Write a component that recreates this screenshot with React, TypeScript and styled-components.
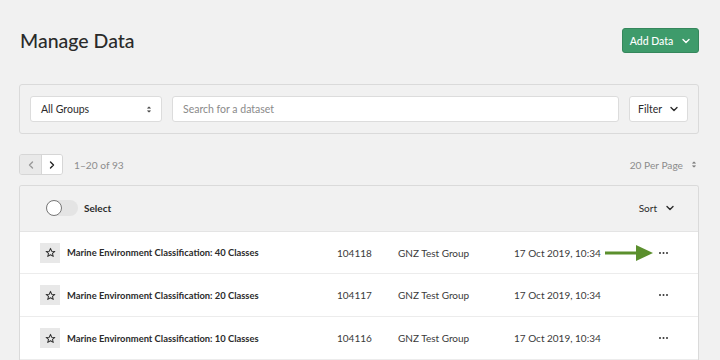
import React from "react";
import styled, { createGlobalStyle } from "styled-components";

const Global = createGlobalStyle`
  html, body { margin: 0; padding: 0; background: #f1f1f1; }
  body { font-family: Lato, "Open Sans", sans-serif; color: #2b2b2b; }
  * { box-sizing: border-box; }
`;

const Page = styled.div`
  width: 720px;
  height: 360px;
  overflow: hidden;
  padding: 28px 21px 0 19px;
  display: flex;
  flex-direction: column;
`;

const Header = styled.div`
  display: flex;
  justify-content: space-between;
  align-items: flex-start;
  height: 56px;
`;

const Title = styled.h1`
  margin: 1px 0 0 1px;
  font-size: 19.5px;
  font-weight: 500;
  color: #2a2a2a;
`;

const PrimaryButton = styled.button`
  height: 25px;
  width: 77px;
  border: 1px solid #35875c;
  border-radius: 3px;
  background: #3e9b6b;
  color: #fff;
  font-family: inherit;
  font-size: 10.5px;
  font-weight: 500;
  display: flex;
  align-items: center;
  justify-content: center;
  gap: 8px;
  padding: 0;
`;

const FilterPanel = styled.div`
  border: 1px solid #dadada;
  border-radius: 3px;
  padding: 11px 10px 10px 10px;
  display: flex;
  gap: 10px;
  height: 50px;
`;

const Field = styled.div<{ $grow?: boolean; $w?: number }>`
  height: 26px;
  background: #fff;
  border: 1px solid #dcdcdc;
  border-radius: 3px;
  display: flex;
  align-items: center;
  justify-content: space-between;
  padding: 0 9px 0 10px;
  font-size: 10.5px;
  color: ${(p) => (p.$grow ? "#8a8a8a" : "#2b2b2b")};
  flex: ${(p) => (p.$grow ? "1" : "none")};
  width: ${(p) => (p.$w ? `${p.$w}px` : "auto")};
`;

const FilterButton = styled(Field)`
  justify-content: center;
  gap: 7px;
  padding: 0;
  color: #2b2b2b;
`;

const PagerRow = styled.div`
  margin-top: 20px;
  height: 21px;
  display: flex;
  align-items: center;
  justify-content: space-between;
`;

const PagerLeft = styled.div`
  display: flex;
  align-items: center;
  gap: 11px;
`;

const PagerGroup = styled.div`
  display: flex;
  border: 1px solid #d6d6d6;
  border-radius: 3px;
  overflow: hidden;
`;

const PagerBtn = styled.div<{ $disabled?: boolean }>`
  width: 21px;
  height: 19px;
  display: flex;
  align-items: center;
  justify-content: center;
  background: ${(p) => (p.$disabled ? "#e9e9e9" : "#fff")};
  & + & { border-left: 1px solid #d6d6d6; }
`;

const Muted = styled.span`
  font-size: 10.2px;
  color: #8c8c8c;
`;

const PerPage = styled.div`
  display: flex;
  align-items: center;
  gap: 8px;
  margin-right: 2px;
  font-size: 10.2px;
  color: #8c8c8c;
`;

const Card = styled.div`
  margin-top: 10px;
  border: 1px solid #dadada;
  border-radius: 3px 3px 0 0;
  border-bottom: none;
  flex: 1;
  display: flex;
  flex-direction: column;
  overflow: hidden;
`;

const CardHeader = styled.div`
  height: 46px;
  background: #f1f1f1;
  border-bottom: 1px solid #e4e4e4;
  display: flex;
  align-items: center;
  justify-content: space-between;
  padding: 0 23px 0 26px;
`;

const ToggleWrap = styled.label`
  display: flex;
  align-items: center;
  gap: 6px;
  font-size: 10px;
  font-weight: 700;
  color: #2b2b2b;
`;

const Track = styled.span`
  width: 32px;
  height: 16px;
  border-radius: 8px;
  background: #e4e4e4;
  position: relative;
  display: inline-block;
`;

const Knob = styled.span`
  position: absolute;
  left: 0;
  top: 0;
  width: 16px;
  height: 16px;
  border-radius: 50%;
  background: #fff;
  border: 1px solid #777;
`;

const SortBtn = styled.div`
  display: flex;
  align-items: center;
  gap: 8px;
  font-size: 10px;
  color: #2b2b2b;
`;

const Row = styled.div`
  height: 43px;
  background: #fff;
  border-bottom: 1px solid #ececec;
  display: grid;
  grid-template-columns: 27px 270px 61px 116px 1fr auto;
  align-items: center;
  padding: 0 30px 0 20px;
  font-size: 10px;
  color: #333;
`;

const StarBox = styled.div`
  width: 20px;
  height: 20px;
  background: #e8e8e8;
  display: flex;
  align-items: center;
  justify-content: center;
`;

const Name = styled.span`
  font-weight: 700;
  font-size: 9.4px;
  color: #2b2b2b;
`;

const Cell = styled.span`
  color: #3a3a3a;
`;

const ActionCell = styled.div`
  display: flex;
  justify-content: flex-end;
  align-items: center;
`;

const Chevron = ({ color = "#2b2b2b", dir = "down" }: { color?: string; dir?: "down" | "left" | "right" }) => {
  const pts = dir === "down" ? "2,3.5 5,6.5 8,3.5" : dir === "right" ? "3.5,2 6.5,5 3.5,8" : "6.5,2 3.5,5 6.5,8";
  return (
    <svg width="10" height="10" viewBox="0 0 10 10">
      <polyline points={pts} fill="none" stroke={color} strokeWidth="1.4" strokeLinecap="round" strokeLinejoin="round" />
    </svg>
  );
};

const UpDown = ({ color = "#555" }: { color?: string }) => (
  <svg width="6" height="9" viewBox="0 0 6 9">
    <path d="M1.5 3.2 L3 1.8 L4.5 3.2 Z M1.5 5.8 L3 7.2 L4.5 5.8 Z" fill={color} stroke={color} strokeWidth="0.6" />
  </svg>
);

const Star = () => (
  <svg width="11" height="11" viewBox="0 0 24 24">
    <polygon points="12,3 14.7,9.2 21.5,9.6 16.3,14 18,20.6 12,17 6,20.6 7.7,14 2.5,9.6 9.3,9.2" fill="none" stroke="#333" strokeWidth="2.2" strokeLinejoin="round" />
  </svg>
);

const Dots = () => (
  <svg width="9" height="4" viewBox="0 0 9 4">
    <circle cx="1" cy="2" r="1" fill="#333" />
    <circle cx="4.5" cy="2" r="1" fill="#333" />
    <circle cx="8" cy="2" r="1" fill="#333" />
  </svg>
);

const GreenArrow = () => (
  <svg width="48" height="18" viewBox="0 0 48 18">
    <rect x="0" y="7.5" width="33" height="3" fill="#5b8f2d" />
    <polygon points="31,1 48,9 31,17" fill="#5b8f2d" />
  </svg>
);

const ArrowWrap = styled.span`
  display: inline-flex;
  margin-right: 6px;
`;

const rows = [
  { name: "Marine Environment Classification: 40 Classes", id: "104118", arrow: true },
  { name: "Marine Environment Classification: 20 Classes", id: "104117" },
  { name: "Marine Environment Classification: 10 Classes", id: "104116" },
];

export default function App() {
  return (
    <>
      <Global />
      <Page>
        <Header>
          <Title>Manage Data</Title>
          <PrimaryButton>
            Add Data <Chevron color="#fff" />
          </PrimaryButton>
        </Header>
        <FilterPanel>
          <Field $w={132}>
            All Groups <UpDown color="#444" />
          </Field>
          <Field $grow>Search for a dataset</Field>
          <FilterButton $w={59}>
            Filter <Chevron />
          </FilterButton>
        </FilterPanel>
        <PagerRow>
          <PagerLeft>
            <PagerGroup>
              <PagerBtn $disabled>
                <Chevron color="#999" dir="left" />
              </PagerBtn>
              <PagerBtn>
                <Chevron color="#222" dir="right" />
              </PagerBtn>
            </PagerGroup>
            <Muted>1–20 of 93</Muted>
          </PagerLeft>
          <PerPage>
            20 Per Page <UpDown color="#777" />
          </PerPage>
        </PagerRow>
        <Card>
          <CardHeader>
            <ToggleWrap>
              <Track>
                <Knob />
              </Track>
              Select
            </ToggleWrap>
            <SortBtn>
              Sort <Chevron />
            </SortBtn>
          </CardHeader>
          {rows.map((r) => (
            <Row key={r.id}>
              <StarBox>
                <Star />
              </StarBox>
              <Name>{r.name}</Name>
              <Cell>{r.id}</Cell>
              <Cell>GNZ Test Group</Cell>
              <Cell>17 Oct 2019, 10:34</Cell>
              <ActionCell>
                {r.arrow && (
                  <ArrowWrap>
                    <GreenArrow />
                  </ArrowWrap>
                )}
                <Dots />
              </ActionCell>
            </Row>
          ))}
        </Card>
      </Page>
    </>
  );
}
